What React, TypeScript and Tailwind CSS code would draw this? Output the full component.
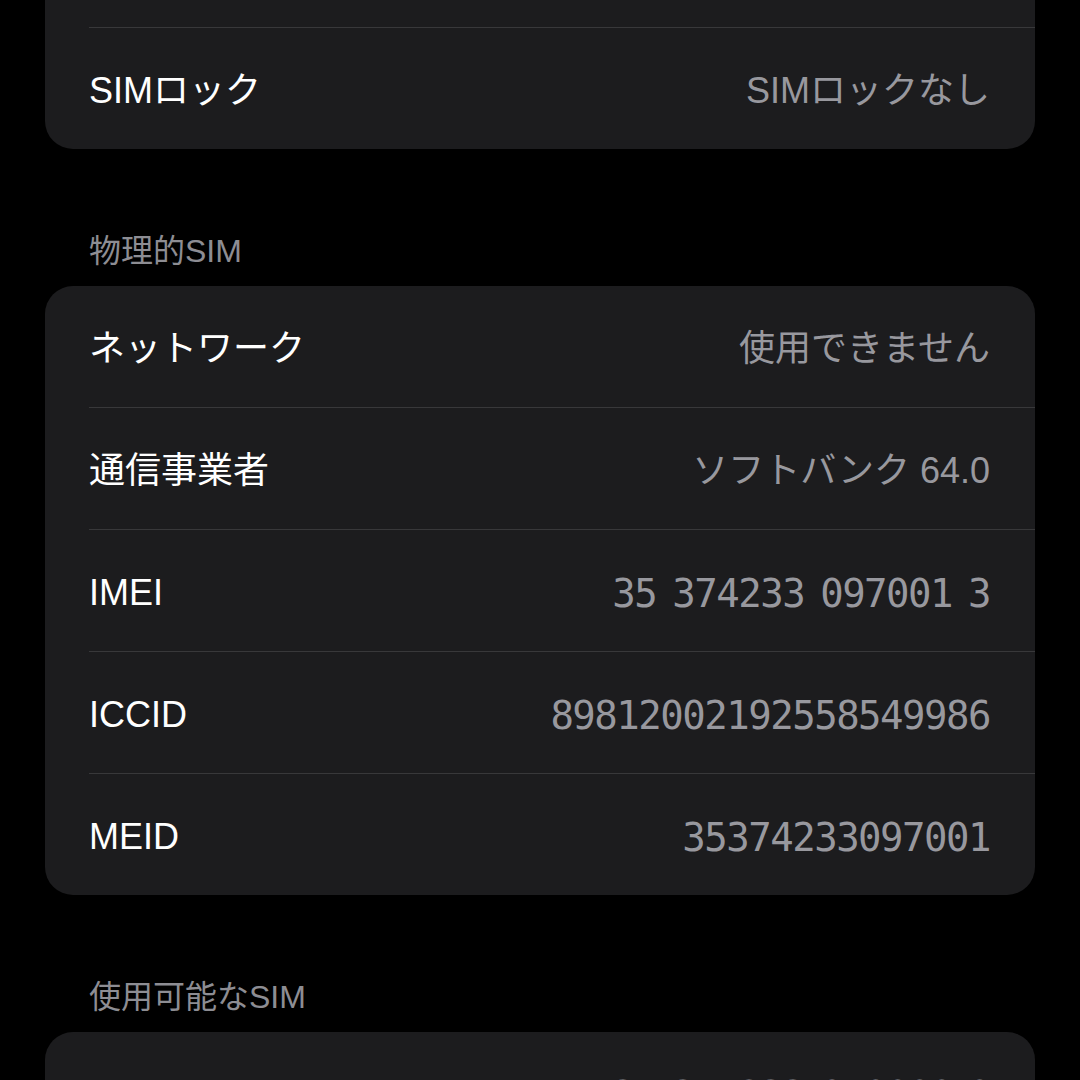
import React from "react";

type Row = { label: string; value: string; mono?: boolean };

const sans = "font-['Liberation_Sans','Noto_Sans_CJK_JP',sans-serif]";
const mono = "font-['DejaVu_Sans_Mono','Noto_Sans_CJK_JP',monospace]";

function Card({ rows, className = "" }: { rows: Row[]; className?: string }) {
  return (
    <div className={`mx-[45px] rounded-[28px] bg-[#1c1c1e] pl-[44px] ${className}`}>
      {rows.map((r, i) => (
        <div
          key={i}
          className={`flex h-[121px] items-center justify-between pt-[5px] pr-[45px] ${
            i < rows.length - 1 ? "border-b border-[#38383a] h-[122px]" : ""
          }`}
        >
          <span className={`${sans} text-[36px] leading-none text-white`}>{r.label}</span>
          <span
            className={`${
              r.mono
                ? `${mono} text-[39px] tracking-[-1.5px] [word-spacing:-6px]`
                : `${sans} text-[36px]`
            } leading-none text-[#98989e]`}
          >
            {r.value}
          </span>
        </div>
      ))}
    </div>
  );
}

function Header({ children }: { children: React.ReactNode }) {
  return (
    <div
      className={`${sans} mx-[89px] mt-[81px] mb-[18px] h-[38px] pt-[2px] text-[32px] leading-[38px] text-[#8d8d93]`}
    >
      {children}
    </div>
  );
}

export default function App() {
  return (
    <div className="h-[1080px] w-[1080px] overflow-hidden bg-black">
      <div className="-mt-[94px]">
        <Card
          rows={[
            { label: "", value: "" },
            { label: "SIMロック", value: "SIMロックなし" },
          ]}
        />
        <Header>物理的SIM</Header>
        <Card
          rows={[
            { label: "ネットワーク", value: "使用できません" },
            { label: "通信事業者", value: "ソフトバンク 64.0" },
            { label: "IMEI", value: "35 374233 097001 3", mono: true },
            { label: "ICCID", value: "89812002192558549986", mono: true },
            { label: "MEID", value: "35374233097001", mono: true },
          ]}
        />
        <Header>使用可能なSIM</Header>
        <Card
          rows={[
            { label: "IMEI2", value: "35 374233 040000 0", mono: true },
            { label: "EID", value: "89049032004008882600000000000000", mono: true },
          ]}
        />
      </div>
    </div>
  );
}
